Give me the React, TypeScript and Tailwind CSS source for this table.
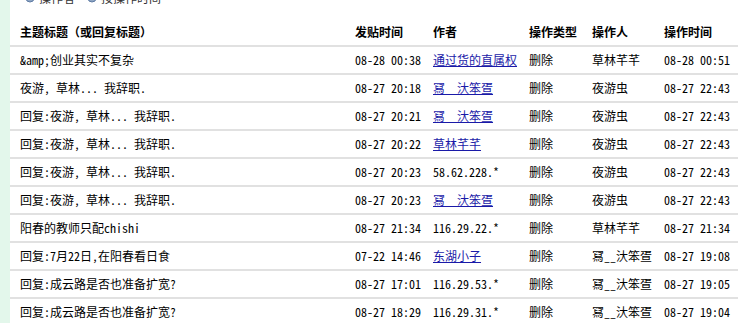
import React from "react";

type Row = {
  title: string;
  posted: string;
  author: string;
  link: boolean;
  op: string;
  operator: string;
  opTime: string;
};

const rows: Row[] = [
  { title: "&amp;创业其实不复杂", posted: "08-28 00:38", author: "通过货的直属权", link: true, op: "删除", operator: "草林芊芊", opTime: "08-28 00:51" },
  { title: "夜游, 草林... 我辞职.", posted: "08-27 20:18", author: "冩__汏笨疍", link: true, op: "删除", operator: "夜游虫", opTime: "08-27 22:43" },
  { title: "回复:夜游, 草林... 我辞职.", posted: "08-27 20:21", author: "冩__汏笨疍", link: true, op: "删除", operator: "夜游虫", opTime: "08-27 22:43" },
  { title: "回复:夜游, 草林... 我辞职.", posted: "08-27 20:22", author: "草林芊芊", link: true, op: "删除", operator: "夜游虫", opTime: "08-27 22:43" },
  { title: "回复:夜游, 草林... 我辞职.", posted: "08-27 20:23", author: "58.62.228.*", link: false, op: "删除", operator: "夜游虫", opTime: "08-27 22:43" },
  { title: "回复:夜游, 草林... 我辞职.", posted: "08-27 20:23", author: "冩__汏笨疍", link: true, op: "删除", operator: "夜游虫", opTime: "08-27 22:43" },
  { title: "阳春的教师只配chishi", posted: "08-27 21:34", author: "116.29.22.*", link: false, op: "删除", operator: "草林芊芊", opTime: "08-27 21:34" },
  { title: "回复:7月22日,在阳春看日食", posted: "07-22 14:46", author: "东湖小子", link: true, op: "删除", operator: "冩__汏笨疍", opTime: "08-27 19:08" },
  { title: "回复:成云路是否也准备扩宽?", posted: "08-27 17:01", author: "116.29.53.*", link: false, op: "删除", operator: "冩__汏笨疍", opTime: "08-27 19:05" },
  { title: "回复:成云路是否也准备扩宽?", posted: "08-27 18:29", author: "116.29.31.*", link: false, op: "删除", operator: "冩__汏笨疍", opTime: "08-27 19:04" },
];

const grid = "grid grid-cols-[335px_78px_96px_63px_72px_1fr] items-center pl-[10px] h-[28px] border-b-2 border-[#e1e1e1] whitespace-nowrap";

const Dot = () => (
  <svg width="10" height="10" viewBox="0 0 10 10">
    <circle cx="5" cy="5" r="4" fill="#8fa6c4" stroke="#5d7aa3" strokeWidth="1" />
  </svg>
);

export default function App() {
  return (
    <div
      className="flex h-[323px] w-[738px] overflow-hidden bg-white text-[12px] text-black"
      style={{ fontFamily: '"Noto Sans Mono CJK SC", "Noto Sans CJK SC", monospace' }}
    >
      <div className="w-[10px] shrink-0 bg-[#e3f7eb]" />
      <div className="flex-1">
        <div className="-mt-[9px] flex h-[14px] items-center gap-1 pl-[15px] text-[#333]">
          <Dot />
          <span>操作者</span>
          <span className="ml-2"><Dot /></span>
          <span>按操作时间</span>
        </div>
        <div className="h-[14px]" />
        <div className={grid + " font-bold"}>
          <span>主题标题（或回复标题）</span>
          <span>发贴时间</span>
          <span>作者</span>
          <span>操作类型</span>
          <span>操作人</span>
          <span>操作时间</span>
        </div>
        {rows.map((r, i) => (
          <div key={i} className={grid}>
            <span>{r.title}</span>
            <span>{r.posted}</span>
            <span>
              {r.link ? (
                <a href="#" className="text-[#1a1aa8] underline">
                  {r.author}
                </a>
              ) : (
                r.author
              )}
            </span>
            <span>{r.op}</span>
            <span>{r.operator}</span>
            <span>{r.opTime}</span>
          </div>
        ))}
      </div>
    </div>
  );
}
